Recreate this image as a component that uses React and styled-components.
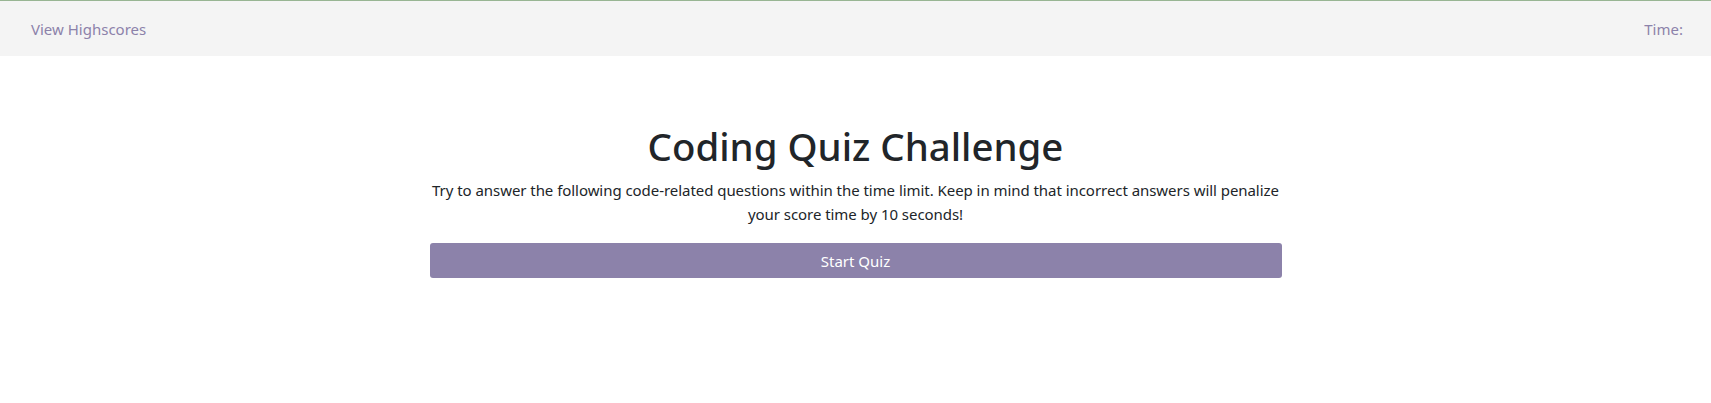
import React from 'react'
import styled, { createGlobalStyle } from 'styled-components'

const GlobalStyle = createGlobalStyle`
	body {
		margin: 0;
		background: #fff;
		font-family: "Noto Sans", "Open Sans", sans-serif;
		color: #212529;
	}
`

const Header = styled.header`
	display: flex;
	justify-content: space-between;
	align-items: center;
	height: 55px;
	padding: 0 28px 0 31px;
	background: #f4f4f4;
	border-top: 1px solid #98b593;
`

const NavText = styled.span`
	font-size: 15px;
	color: #8c82aa;
	cursor: ${p => (p.$link ? 'pointer' : 'default')};
`

const Main = styled.main`
	display: flex;
	flex-direction: column;
	align-items: center;
	padding-top: 66px;
`

const Card = styled.section`
	width: 852px;
	display: flex;
	flex-direction: column;
	align-items: stretch;
	text-align: center;
`

const Title = styled.h1`
	margin: 0 0 8px;
	font-size: 38.4px;
	font-weight: 500;
	line-height: 48px;
`

const Intro = styled.p`
	margin: 0 0 17px;
	font-size: 15px;
	line-height: 24px;
	letter-spacing: -0.05px;
`

const StartButton = styled.button`
	height: 35px;
	border: none;
	border-radius: 3px;
	background: #8c82aa;
	color: #fff;
	font-family: inherit;
	font-size: 15px;
	cursor: pointer;
`

export default function App() {
	return (
		<>
			<GlobalStyle />
			<Header>
				<NavText $link>View Highscores</NavText>
				<NavText>Time:</NavText>
			</Header>
			<Main>
				<Card>
					<Title>Coding Quiz Challenge</Title>
					<Intro>
						Try to answer the following code-related questions within the time
						limit. Keep in mind that incorrect answers will penalize your score
						time by 10 seconds!
					</Intro>
					<StartButton>Start Quiz</StartButton>
				</Card>
			</Main>
		</>
	)
}
